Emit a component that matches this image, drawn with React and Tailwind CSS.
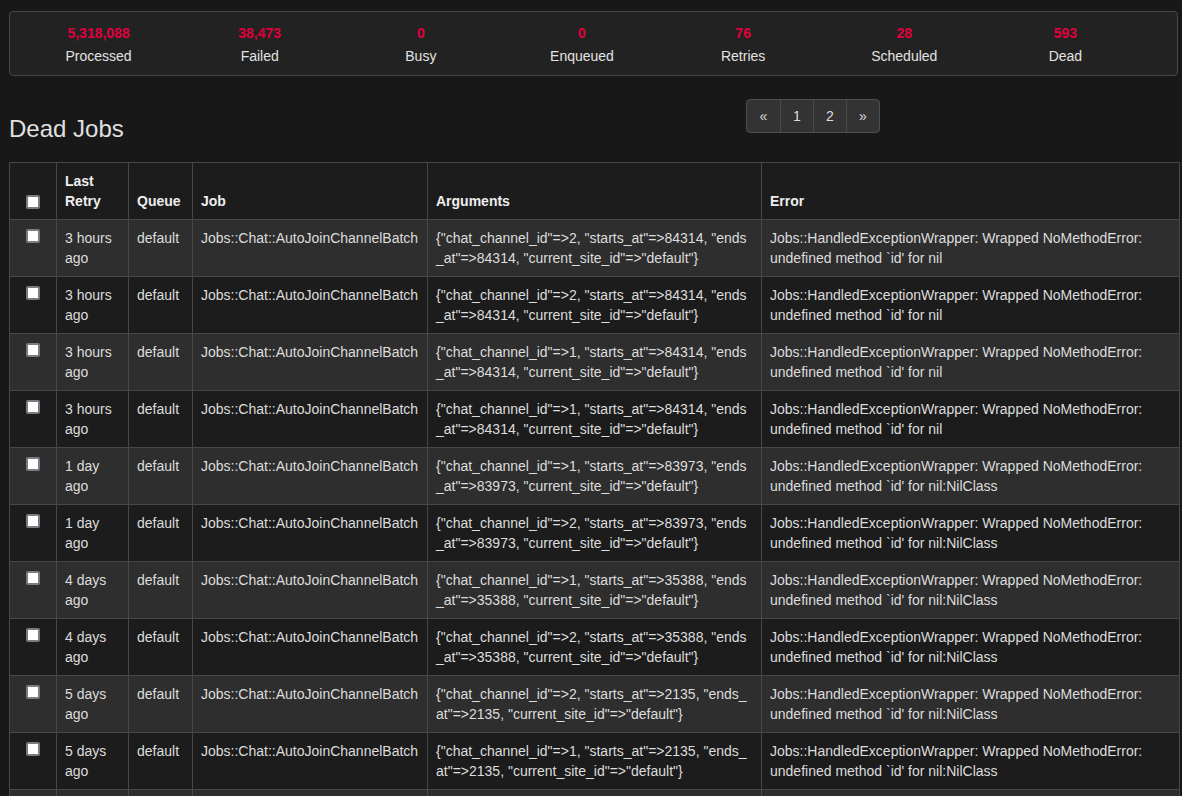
import React from "react";

const stats = [
  ["5,318,088", "Processed"],
  ["38,473", "Failed"],
  ["0", "Busy"],
  ["0", "Enqueued"],
  ["76", "Retries"],
  ["28", "Scheduled"],
  ["593", "Dead"],
];

const jobs = [
  ["3 hours ago", 2, 84314, "nil"],
  ["3 hours ago", 2, 84314, "nil"],
  ["3 hours ago", 1, 84314, "nil"],
  ["3 hours ago", 1, 84314, "nil"],
  ["1 day ago", 1, 83973, "nil:NilClass"],
  ["1 day ago", 2, 83973, "nil:NilClass"],
  ["4 days ago", 1, 35388, "nil:NilClass"],
  ["4 days ago", 2, 35388, "nil:NilClass"],
  ["5 days ago", 2, 2135, "nil:NilClass"],
  ["5 days ago", 1, 2135, "nil:NilClass"],
  ["6 days ago", 1, 1790, "nil:NilClass"],
  ["6 days ago", 2, 1790, "nil:NilClass"],
];

function Check() {
  return (
    <span className="block mx-auto w-[14px] h-[14px] bg-white border-2 border-[#7b7b86] rounded-[2px]" />
  );
}

function argLines(id, ts) {
  const short = String(ts).length < 5;
  if (short) {
    return [
      `{"chat_channel_id"=>${id}, "starts_at"=>${ts}, "ends_`,
      `at"=>${ts}, "current_site_id"=>"default"}`,
    ];
  }
  return [
    `{"chat_channel_id"=>${id}, "starts_at"=>${ts}, "ends`,
    `_at"=>${ts}, "current_site_id"=>"default"}`,
  ];
}

export default function App() {
  return (
    <div
      className="min-h-screen bg-[#181818] text-[#dddddd] pl-[9px] pr-[3px] pt-[11px] text-[14px] leading-[20px]"
      style={{ fontFamily: '"Liberation Sans", Arial, Helvetica, sans-serif' }}
    >
      {/* summary bar */}
      <div className="border border-[#474747] bg-[#222222] rounded-[4px] pl-[8px] pr-[31px] pt-[11px] pb-[9px] grid grid-cols-7 w-[1169px]">
        {stats.map(([n, label]) => (
          <div key={label} className="flex flex-col items-center">
            <span className="font-bold text-[#e0003d] leading-[20px]">{n}</span>
            <span className="mt-[3px] leading-[20px] text-[#e2e2e2]">{label}</span>
          </div>
        ))}
      </div>

      {/* heading + pager */}
      <div className="flex items-start">
        <h3 className="w-[737px] mt-[40px] text-[24px] leading-[26px] font-normal text-[#e0e0e0]">
          Dead Jobs
        </h3>
        <div className="mt-[23px] flex h-[34px] border border-[#4e4e4e] rounded-[4px] bg-[#333333] overflow-hidden">
          {["«", "1", "2", "»"].map((p, i) => (
            <span
              key={p}
              className={
                "w-[33px] flex items-center justify-center text-[#dddddd] " +
                (i > 0 ? "border-l border-[#4a4a4a]" : "")
              }
            >
              {p}
            </span>
          ))}
        </div>
      </div>

      {/* jobs table */}
      <table className="mt-[20px] table-fixed border-collapse w-[1170px]">
        <colgroup>
          <col className="w-[47px]" />
          <col className="w-[72px]" />
          <col className="w-[64px]" />
          <col className="w-[235px]" />
          <col className="w-[334px]" />
          <col className="w-[418px]" />
        </colgroup>
        <thead>
          <tr className="bg-[#1c1c1c] text-[#eeeeee]">
            <th className="border border-[#474747] px-[8px] pb-[8px] align-bottom">
              <span className="block mx-auto mb-[2px] w-[14px] h-[14px] bg-white border-2 border-[#7b7b86] rounded-[2px]" />
            </th>
            <th className="border border-[#474747] px-[8px] pt-[8px] pb-[8px] align-bottom text-left font-bold">
              Last Retry
            </th>
            <th className="border border-[#474747] px-[8px] pb-[8px] align-bottom text-left font-bold">
              Queue
            </th>
            <th className="border border-[#474747] px-[8px] pb-[8px] align-bottom text-left font-bold">
              Job
            </th>
            <th className="border border-[#474747] px-[8px] pb-[8px] align-bottom text-left font-bold">
              Arguments
            </th>
            <th className="border border-[#474747] px-[8px] pb-[8px] align-bottom text-left font-bold">
              Error
            </th>
          </tr>
        </thead>
        <tbody>
          {jobs.map(([when, id, ts, tail], i) => {
            const [a1, a2] = argLines(id, ts);
            return (
              <tr key={i} className={i % 2 === 0 ? "bg-[#2e2e2e]" : "bg-[#1c1c1c]"}>
                <td className="border border-[#474747] px-[8px] pt-[9px] pb-[8px] align-top">
                  <Check />
                </td>
                <td className="border border-[#474747] p-[8px] align-top">{when}</td>
                <td className="border border-[#474747] p-[8px] align-top">default</td>
                <td className="border border-[#474747] p-[8px] align-top whitespace-nowrap">
                  Jobs::Chat::AutoJoinChannelBatch
                </td>
                <td className="border border-[#474747] p-[8px] align-top whitespace-nowrap">
                  <span className="block">{a1}</span>
                  <span className="block">{a2}</span>
                </td>
                <td className="border border-[#474747] p-[8px] align-top whitespace-nowrap">
                  <span className="block">
                    Jobs::HandledExceptionWrapper: Wrapped NoMethodError:
                  </span>
                  <span className="block">undefined method `id' for {tail}</span>
                </td>
              </tr>
            );
          })}
        </tbody>
      </table>
    </div>
  );
}
